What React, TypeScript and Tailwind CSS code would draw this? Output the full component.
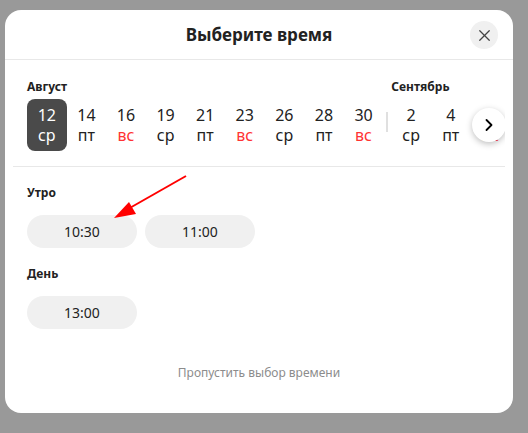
import { X, ChevronRight } from "lucide-react";

const august = [
  { d: "12", w: "ср", sel: true },
  { d: "14", w: "пт" },
  { d: "16", w: "вс", red: true },
  { d: "19", w: "ср" },
  { d: "21", w: "пт" },
  { d: "23", w: "вс", red: true },
  { d: "26", w: "ср" },
  { d: "28", w: "пт" },
  { d: "30", w: "вс", red: true },
];

const september = [
  { d: "2", w: "ср" },
  { d: "4", w: "пт" },
  { d: "6", w: "вс", red: true },
];

type Day = { d: string; w: string; sel?: boolean; red?: boolean };

const DayCell = ({ day }: { day: Day }) => (
  <div
    className={`w-[39.6px] h-[52px] shrink-0 flex flex-col items-center justify-center rounded-[8px] leading-[20px] text-[16px] ${
      day.sel ? "bg-[#4a4a4a] text-white" : "text-[#222]"
    }`}
  >
    <span>{day.d}</span>
    <span className={day.red && !day.sel ? "text-[#ff3333]" : ""}>{day.w}</span>
  </div>
);

const Slot = ({ time }: { time: string }) => (
  <button className="w-[110px] h-[33px] rounded-full bg-[#f0f0f0] text-[14px] text-[#222] flex items-center justify-center">
    {time}
  </button>
);

export default function App() {
  return (
    <div
      className="relative w-[528px] h-[433px] bg-[#999999] pt-[10px] pl-[5px] overflow-hidden"
      style={{ fontFamily: '"Noto Sans", Arial, sans-serif' }}
    >
      <div className="w-[508px] h-[403px] bg-white rounded-[16px] flex flex-col overflow-hidden">
        {/* header */}
        <div className="relative h-[50px] shrink-0 border-b border-[#e8e8e8] flex items-center justify-center">
          <h2 className="text-[17px] font-bold text-[#222]">Выберите время</h2>
          <button className="absolute right-[15px] top-[11px] w-[28px] h-[28px] rounded-full bg-[#f0f0f0] flex items-center justify-center text-[#444]">
            <X size={19} strokeWidth={1.6} />
          </button>
        </div>

        {/* dates */}
        <div className="relative mx-[8px] border-b border-[#e8e8e8] pt-[19px] pb-[15px] pl-[14px] overflow-hidden">
          <div className="flex">
            <div className="flex flex-col shrink-0">
              <div className="h-[16px] mb-[4px] text-[12px] font-bold leading-[16px] text-[#222]">Август</div>
              <div className="flex">
                {august.map((d) => (
                  <DayCell key={d.d} day={d} />
                ))}
              </div>
            </div>
            <div className="w-[8px] shrink-0 flex items-end pb-[19px] justify-center">
              <div className="w-[2px] h-[20px] bg-[#e0e0e0]" />
            </div>
            <div className="flex flex-col shrink-0">
              <div className="h-[16px] mb-[4px] text-[12px] font-bold leading-[16px] text-[#222]">Сентябрь</div>
              <div className="flex">
                {september.map((d) => (
                  <DayCell key={d.d} day={d} />
                ))}
              </div>
            </div>
          </div>
          <button className="absolute right-[-1px] top-[48px] w-[34px] h-[34px] rounded-full bg-white shadow-[0_2px_6px_rgba(0,0,0,0.25)] flex items-center justify-center text-black">
            <ChevronRight size={20} strokeWidth={2.2} />
          </button>
        </div>

        {/* times */}
        <div className="px-[22px] pt-[18px] flex flex-col">
          <div className="h-[16px] text-[12px] font-bold leading-[16px] text-[#222]">Утро</div>
          <div className="flex gap-[8px] mt-[14px]">
            <Slot time="10:30" />
            <Slot time="11:00" />
          </div>
          <div className="h-[16px] mt-[18px] text-[12px] font-bold leading-[16px] text-[#222]">День</div>
          <div className="flex gap-[8px] mt-[14px]">
            <Slot time="13:00" />
          </div>
        </div>

        <div className="mt-[36px] text-center text-[12px] leading-[16px] text-[#8c8c8c]">
          Пропустить выбор времени
        </div>
      </div>

      {/* red annotation arrow */}
      <svg className="absolute left-0 top-0 pointer-events-none" width="528" height="433">
        <line x1="186" y1="176" x2="128" y2="209" stroke="#ff0000" strokeWidth="2" />
        <polygon points="114,218 129,202 136,214" fill="#ff0000" />
      </svg>
    </div>
  );
}
